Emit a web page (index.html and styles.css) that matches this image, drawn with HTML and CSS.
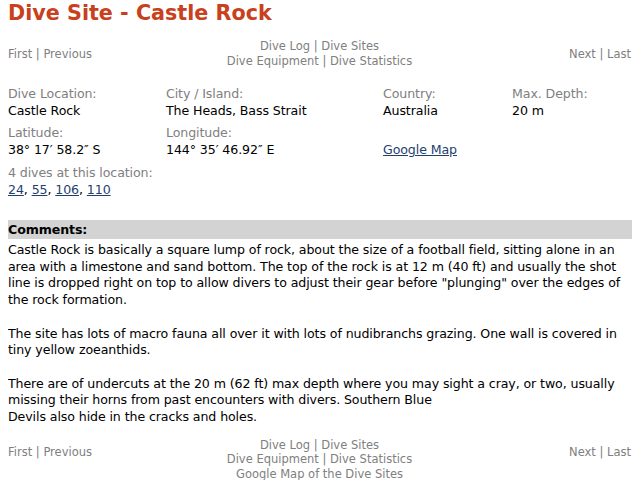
FILE: index.html
```html
<!DOCTYPE html>
<html>
<head>
<meta charset="utf-8">
<link rel="stylesheet" href="styles.css">
</head>
<body>
<h1 class="title">Dive Site - Castle Rock</h1>
<div class="nav nav-top">
  <div class="nav-left">First | Previous</div>
  <div class="nav-center">Dive Log | Dive Sites<br>Dive Equipment | Dive Statistics</div>
  <div class="nav-right">Next | Last</div>
</div>
<div class="details">
  <div class="cell"><div class="label">Dive Location:</div><div class="value">Castle Rock</div></div>
  <div class="cell"><div class="label">City / Island:</div><div class="value">The Heads, Bass Strait</div></div>
  <div class="cell"><div class="label">Country:</div><div class="value">Australia</div></div>
  <div class="cell"><div class="label">Max. Depth:</div><div class="value">20 m</div></div>
  <div class="cell"><div class="label">Latitude:</div><div class="value">38° 17′ 58.2″ S</div></div>
  <div class="cell"><div class="label">Longitude:</div><div class="value">144° 35′ 46.92″ E</div></div>
  <div class="cell"><div class="label">&nbsp;</div><div class="value"><a href="#">Google Map</a></div></div>
  <div class="cell"></div>
  <div class="cell wide"><div class="label">4 dives at this location:</div><div class="value"><a href="#">24</a>, <a href="#">55</a>, <a href="#">106</a>, <a href="#">110</a></div></div>
</div>
<div class="comments-head">Comments:</div>
<div class="comments">Castle Rock is basically a square lump of rock, about the size of a football field, sitting alone in an area with a limestone and sand bottom. The top of the rock is at 12 m (40 ft) and usually the shot line is dropped right on top to allow divers to adjust their gear before "plunging" over the edges of the rock formation.<br><br>The site has lots of macro fauna all over it with lots of nudibranchs grazing. One wall is covered in tiny yellow zoeanthids.<br><br>There are of undercuts at the 20 m (62 ft) max depth where you may sight a cray, or two, usually missing their horns from past encounters with divers. Southern Blue<br>Devils also hide in the cracks and holes.</div>
<div class="nav nav-bottom">
  <div class="nav-left">First | Previous</div>
  <div class="nav-center">Dive Log | Dive Sites<br>Dive Equipment | Dive Statistics<br>Google Map of the Dive Sites</div>
  <div class="nav-right">Next | Last</div>
</div>
</body>
</html>
```
FILE: styles.css
```css
html, body {
  background: #ffffff;
}
body {
  margin: 0 8px;
  font-family: "DejaVu Sans", Verdana, sans-serif;
  font-size: 12.6px;
  letter-spacing: -0.1px;
  color: #000000;
}
.title {
  margin: 0;
  padding-top: 1px;
  font-size: 20.7px;
  letter-spacing: 0;
  font-weight: bold;
  color: #c8401c;
  line-height: 24px;
}
.nav {
  display: flex;
  align-items: center;
  justify-content: space-between;
  font-size: 11.5px;
  letter-spacing: 0;
  color: #808080;
  line-height: 15px;
}
.nav-top {
  margin-top: 14px;
}
.nav-left, .nav-right {
  width: 180px;
}
.nav-right {
  text-align: right;
  padding-right: 1px;
}
.nav-center {
  text-align: center;
  flex: 1;
}
.details {
  margin-top: 16px;
  display: grid;
  grid-template-columns: 158px 217px 129px 1fr;
  row-gap: 5px;
  line-height: 17px;
}
.wide {
  grid-column: 1 / span 4;
  padding-top: 1px;
}
.label {
  color: #808080;
}
a {
  color: #1f3f6f;
  text-decoration: underline;
}
.comments-head {
  margin-top: 22px;
  background: #d3d3d3;
  font-weight: bold;
  line-height: 18px;
  padding-top: 1px;
  margin-right: -1px;
}
.comments {
  line-height: 16.7px;
  padding-top: 3px;
}
.nav-bottom {
  margin-top: 12px;
  line-height: 14.5px;
  align-items: flex-start;
}
.nav-bottom .nav-left, .nav-bottom .nav-right {
  padding-top: 7px;
}
```
